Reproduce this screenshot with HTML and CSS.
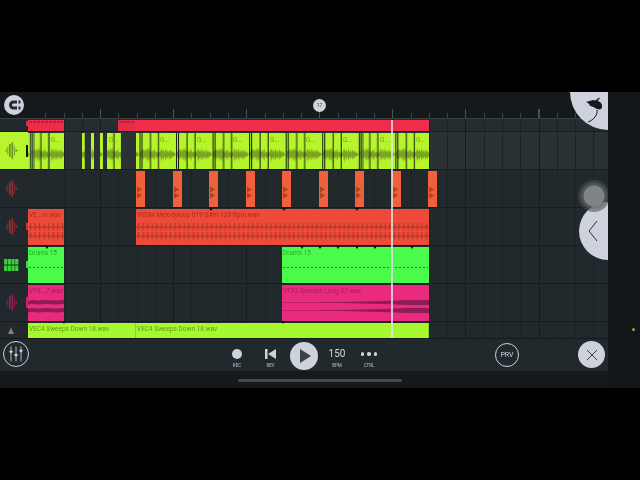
FILE: index.html
```html
<!DOCTYPE html>
<html lang="en">
<head>
<meta charset="utf-8">
<title>FL Studio Mobile</title>
<link rel="stylesheet" href="styles.css">
</head>
<body>
<svg class="defs" width="0" height="0" aria-hidden="true">
  <defs>
    <pattern id="limeWave" patternUnits="userSpaceOnUse" x="1.85" y="0" width="36.55" height="38">
      <path class="lime-wave" d="M0 22L1 18L2 20L3 16L4 19L5 17L6 20L7 16L8 19L9 15L10 20L11 17L12 21L13 18L14 20L15 16L16 21L17 19L18 21L19 18L20 21L21 19L22 16L23 20L24 17L25 21L26 16L27 20L28 18L29 21L30 17L31 20L32 18L33 21L34 19L35 21L36.55 22L35 24L34 25L33 24L32 27L31 25L30 28L29 24L28 27L27 25L26 29L25 24L24 28L23 25L22 30L21 25L20 24L19 27L18 25L17 26L16 24L15 29L14 25L13 27L12 24L11 28L10 25L9 30L8 25L7 29L6 24L5 27L4 25L3 29L2 24L1 27Z"/>
      <rect class="lime-line" x="0" width="1" height="38"/>
      <rect class="lime-line" x="2" width="1" height="38"/>
      <rect class="lime-line" x="10.5" width="1" height="38"/>
      <rect class="lime-line" x="18.5" width="1" height="38"/>
    </pattern>
    <pattern id="redComb" patternUnits="userSpaceOnUse" x="1" y="0" width="9.14" height="36">
      <rect class="comb" x="0" y="17.500" width="9.14" height="1"/>
      <rect class="comb" x="0" y="26.500" width="9.14" height="1"/>
      <rect class="comb" x="1" y="14" width="1" height="7"/>
      <rect class="comb" x="5.57" y="14" width="1" height="7"/>
      <rect class="comb" x="1" y="23" width="1" height="7"/>
      <rect class="comb" x="5.57" y="23" width="1" height="7"/>
    </pattern>
    <symbol id="wave" viewBox="0 0 16 20">
      <path d="M1 8h1v4H1zM3 5h1v10H3zM5 2h2v16H5zM8 0h2v20H8zM11 4h1v12h-1zM13 8l3 2-3 2z"/>
    </symbol>
    <symbol id="burst" viewBox="0 0 8 16">
      <path d="M0 0l7 4-7 4zM0 8l7 4-7 4z"/>
    </symbol>
  </defs>
</svg>

<div class="screen">
  <div class="app">
    <main class="daw">
      <header class="ruler">
        <div class="ruler-gutter"></div>
        <div class="ruler-ticks"></div>
        <button class="magnet" type="button" aria-label="Snap">
          <svg viewBox="0 0 20 20" width="20" height="20"><path class="magnet-shape" d="M13 5.500H9.500a4.500 4.500 0 0 0 0 9H13v-3H9.500a1.500 1.500 0 0 1 0-3H13zM14.500 5.500h2v3h-2zM14.500 11.500h2v3h-2z"/></svg>
        </button>
        <span class="bar-marker">17</span>
      </header>

      <section class="tracks">
        <div class="track track-thin">
          <div class="head"><i class="handle handle-red handle-top"></i></div>
          <div class="lane">
            <div class="clip clip-crimson" style="left:0;width:36px"><i class="strip"></i></div>
            <div class="clip clip-crimson-dim" style="left:90px;width:18px"><i class="strip"></i></div>
            <div class="clip clip-crimson" style="left:108px;width:293px"></div>
          </div>
        </div>

        <div class="track track-hi">
          <div class="head head-selected">
            <svg class="head-icon icon-lime"><use href="#wave"/></svg>
            <i class="handle handle-black"></i>
          </div>
          <div class="lane">
            <svg class="lane-art" width="580" height="38">
              <g class="lime-clips">
                <rect x="0" y="1" width="36" height="36"/>
                <rect x="54" y="1" width="3" height="36"/>
                <rect x="63" y="1" width="3" height="36"/>
                <rect x="72" y="1" width="3" height="36"/>
                <rect x="79" y="1" width="14" height="36"/>
                <rect x="108" y="1" width="293" height="36"/>
              </g>
              <g class="lime-overlay">
                <rect x="0" y="1" width="36" height="36"/>
                <rect x="54" y="1" width="3" height="36"/>
                <rect x="63" y="1" width="3" height="36"/>
                <rect x="72" y="1" width="3" height="36"/>
                <rect x="79" y="1" width="14" height="36"/>
                <rect x="108" y="1" width="293" height="36"/>
              </g>
              <rect class="lime-grey" x="2" y="1" width="5" height="36"/>
              <rect class="lime-grey" x="20" y="1" width="2" height="36"/>
              <rect class="lime-grey" x="332" y="1" width="4" height="36"/>
            </svg>
            <span class="clip-label label-lime" style="left:23px">G...</span>
            <span class="clip-label label-lime" style="left:81px">G...</span>
            <span class="clip-label label-lime" style="left:132px">G...</span>
            <span class="clip-label label-lime" style="left:169px">G...</span>
            <span class="clip-label label-lime" style="left:205px">G...</span>
            <span class="clip-label label-lime" style="left:242px">G...</span>
            <span class="clip-label label-lime" style="left:278px">G...</span>
            <span class="clip-label label-lime" style="left:315px">G...</span>
            <span class="clip-label label-lime" style="left:352px">G...</span>
            <span class="clip-label label-lime" style="left:388px">G...</span>
          </div>
        </div>

        <div class="track">
          <div class="head">
            <svg class="head-icon icon-red"><use href="#wave"/></svg>
          </div>
          <div class="lane">
            <div class="clip clip-orange" style="left:108px;width:9px"><svg class="burst"><use href="#burst"/></svg></div>
            <div class="clip clip-orange" style="left:145px;width:9px"><svg class="burst"><use href="#burst"/></svg></div>
            <div class="clip clip-orange" style="left:181px;width:9px"><svg class="burst"><use href="#burst"/></svg></div>
            <div class="clip clip-orange" style="left:218px;width:9px"><svg class="burst"><use href="#burst"/></svg></div>
            <div class="clip clip-orange" style="left:254px;width:9px"><svg class="burst"><use href="#burst"/></svg></div>
            <div class="clip clip-orange" style="left:291px;width:9px"><svg class="burst"><use href="#burst"/></svg></div>
            <div class="clip clip-orange" style="left:327px;width:9px"><svg class="burst"><use href="#burst"/></svg></div>
            <div class="clip clip-orange" style="left:364px;width:9px"><svg class="burst"><use href="#burst"/></svg></div>
            <div class="clip clip-orange" style="left:400px;width:9px"><svg class="burst"><use href="#burst"/></svg></div>
          </div>
        </div>

        <div class="track">
          <div class="head">
            <svg class="head-icon icon-red"><use href="#wave"/></svg>
            <i class="handle handle-red"></i>
          </div>
          <div class="lane">
            <div class="clip clip-red" style="left:0;width:36px">
              <span class="name">VE...m.wav</span>
              <svg class="fill-art"><rect width="100%" height="100%" fill="url(#redComb)"/></svg>
            </div>
            <div class="clip clip-red" style="left:108px;width:293px">
              <span class="name">VEDM Melodyloop 019 G#m 128 Bpm.wav</span>
              <svg class="fill-art"><rect width="100%" height="100%" fill="url(#redComb)"/></svg>
            </div>
          </div>
        </div>

        <div class="track">
          <div class="head">
            <svg class="head-icon head-drums" viewBox="0 0 16 13">
              <path d="M0 0h3.400v6H0zM4 0h3.400v6H4zM8 0h3.400v6H8zM12 0h3.400v6H12zM0 7h3.400v6H0zM4 7h3.400v6H4zM8 7h3.400v6H8zM12 7h3.400v6H12z"/>
            </svg>
            <i class="handle handle-green"></i>
          </div>
          <div class="lane">
            <div class="clip clip-green" style="left:0;width:36px"><span class="name">Drums 15</span><i class="dash"></i></div>
            <div class="clip clip-green" style="left:254px;width:147px"><span class="name">Drums 15</span><i class="dash"></i></div>
          </div>
        </div>

        <div class="track">
          <div class="head">
            <svg class="head-icon icon-pink"><use href="#wave"/></svg>
            <i class="handle handle-pink"></i>
          </div>
          <div class="lane">
            <div class="clip clip-pink" style="left:0;width:36px">
              <span class="name">VFX...7.wav</span>
              <svg class="fill-art" viewBox="0 0 36 36" preserveAspectRatio="none">
                <path class="pink-wave" d="M0 16l4-1 6 .5 8-.5 10 .5 8-.5v4l-8 .5-10-.5-8 .5-6-.5-4 .5zM0 24l4-1 6 .5 8-.5 10 .5 8-.5v4l-8 .5-10-.5-8 .5-6-.5-4 .5z"/>
              </svg>
            </div>
            <div class="clip clip-pink" style="left:254px;width:147px">
              <span class="name">VFX2 Sweeps Long 07.wav</span>
              <svg class="fill-art" viewBox="0 0 147 36" preserveAspectRatio="none">
                <path class="pink-wave" d="M0 17.200H30L60 17L80 16.500L100 16L115 15.500L125 15L147 15V20L125 20L115 19.500L100 19L80 18.500L60 18L30 17.800H0zM0 25.200H30L60 25L80 24.500L100 24L115 23.500L125 23L147 23V28L125 28L115 27.500L100 27L80 26.500L60 26L30 25.800H0z"/>
              </svg>
            </div>
          </div>
        </div>

        <div class="track track-last">
          <div class="head">
            <svg class="head-icon head-cone" viewBox="0 0 6 7"><path d="M3 0l1 3 2 4H0l2-4z"/></svg>
          </div>
          <div class="lane">
            <div class="clip clip-lime" style="left:0;width:108px"><span class="name">VEC4 Sweeps Down 18.wav</span></div>
            <div class="clip clip-lime" style="left:108px;width:293px"><span class="name">VEC4 Sweeps Down 18.wav</span></div>
          </div>
        </div>

        <i class="notch" style="left:209px;top:89px"></i>
        <i class="notch" style="left:282px;top:89px"></i>
        <i class="notch" style="left:355px;top:89px"></i>
        <i class="notch" style="left:45px;top:127px"></i>
        <i class="notch" style="left:300px;top:127px"></i>
        <i class="notch" style="left:318px;top:127px"></i>
        <i class="notch" style="left:336px;top:127px"></i>
        <i class="notch" style="left:355px;top:127px"></i>
        <i class="notch" style="left:373px;top:127px"></i>
        <i class="notch" style="left:410px;top:127px"></i>
        <i class="notch" style="left:62px;top:202px"></i>
        <i class="notch" style="left:281px;top:202px"></i>

        <div class="playhead"></div>
      </section>

      <footer class="transport">
        <button class="mixer" type="button" aria-label="Mixer">
          <svg viewBox="0 0 24 24" width="24" height="24">
            <path class="mixer-lines" d="M6 3v18M12 3v18M18 3v18"/>
            <path class="mixer-knobs" d="M4 8h4v1.500l-2 2-2-2zM10 12h4v1.500l-2 2-2-2zM16 7h4v1.500l-2 2-2-2z"/>
          </svg>
        </button>
        <div class="controls">
          <div class="control control-rec"><i class="rec-dot"></i><span class="control-label">REC</span></div>
          <div class="control control-rev">
            <svg width="12" height="10" viewBox="0 0 12 10"><path class="light-fill" d="M0 0h2.500v10H0zM11 0v10L3 5z"/></svg>
            <span class="control-label">REV</span>
          </div>
          <button class="play" type="button" aria-label="Play">
            <svg width="12" height="14" viewBox="0 0 12 14"><path class="dark-fill" d="M1 0l11 7-11 7z"/></svg>
          </button>
          <div class="control control-bpm"><span class="bpm-value">150</span><span class="control-label">BPM</span></div>
          <div class="control control-ctrl"><span class="dots"><i></i><i></i><i></i></span><span class="control-label">CTRL</span></div>
        </div>
        <button class="prv" type="button">PRV</button>
        <button class="close" type="button" aria-label="Close">
          <svg width="12" height="12" viewBox="0 0 12 12"><path class="close-x" d="M1 1l10 10M11 1L1 11"/></svg>
        </button>
      </footer>

      <nav class="nav"><i class="nav-pill"></i></nav>

      <button class="fab-top" type="button" aria-label="Menu">
        <svg width="30" height="36" viewBox="0 0 30 36">
          <path class="fruit" d="M1 10L8 8L10.500 8.500L14 5.500L14.800 6.200L12.500 9C15.500 9.500 17.500 12 17 15C16.500 18 13.500 17.500 12 17C10 16 8 14.500 5 14C5 12 3 11 1 10Z"/>
          <path class="fruit-line" d="M12 18C13 22 9 28 3 30"/>
        </svg>
      </button>
      <button class="fab-side" type="button" aria-label="Open">
        <svg width="10" height="22" viewBox="0 0 10 22"><path class="chev" d="M9 1L1 11l8 10"/></svg>
      </button>
      <div class="knob"></div>
    </main>
    <aside class="side"><i class="led"></i></aside>
  </div>
</div>
</body>
</html>
```

FILE: styles.css
```css
* { box-sizing: border-box; }
html, body { margin: 0; height: 100%; background: #000; overflow: hidden; }
button { border: 0; padding: 0; margin: 0; font: inherit; }
i { display: block; }
.defs { position: absolute; }

.screen {
  height: 480px;
  padding-top: 92px;
  font-family: Roboto, "Liberation Sans", sans-serif;
}
.app { display: flex; height: 296px; filter: blur(.4px); }
.daw {
  position: relative;
  width: 608px;
  display: flex;
  flex-direction: column;
  overflow: hidden;
  background: #22292c;
}
.side { position: relative; flex: 1; background: #10161a; }
.led {
  position: absolute; left: 24px; top: 236px;
  width: 3px; height: 3px; border-radius: 50%;
  background: #c98a2c;
}

/* ruler */
.ruler {
  position: relative;
  height: 27px;
  flex: none;
  display: flex;
  background: #14191c;
  border-bottom: 1px solid #3a4144;
}
.ruler-gutter { flex: none; width: 28px; }
.ruler-ticks {
  flex: 1;
  background-image:
    repeating-linear-gradient(90deg, transparent 0 71.58px, #4b5255 71.58px 73.08px),
    repeating-linear-gradient(90deg, transparent 0 17.27px, #3c4346 17.27px 18.27px);
  background-size: 100% 9px, 100% 5px;
  background-position: 0 17px, 0 21px;
  background-repeat: no-repeat;
}
.magnet {
  position: absolute; left: 4px; top: 3px;
  width: 20px; height: 20px; border-radius: 50%;
  background: #cdd2dc;
}
.magnet-shape { fill: #22292c; }
.bar-marker {
  position: absolute; left: 313px; top: 7px;
  width: 13px; height: 13px; border-radius: 50%;
  background: #cdd2dc; color: #3c4448;
  font-size: 5px; line-height: 13px; text-align: center;
}

/* tracks */
.tracks { position: relative; flex: 1; display: flex; flex-direction: column; min-height: 0; }
.track { flex: none; height: 38px; display: flex; background: #22292c; border-bottom: 1px solid #171c1f; }
.track-thin { height: 13px; background: #262d30; }
.track-hi { background: #2b3235; }
.track-last { height: 16px; border-bottom: 0; }
.head { position: relative; flex: none; width: 28px; display: flex; align-items: center; justify-content: center; padding-right: 6px; background: #22292c; }
.head-selected { background: #b7f52e; }
.head-icon { width: 13px; height: 17px; }
.icon-lime { fill: #6a9420; }
.icon-red { fill: #8e3135; }
.icon-pink { fill: #8a2258; }
.head-drums { width: 15px; height: 12px; fill: #39d23c; }
.head-cone { width: 6px; height: 7px; fill: #8e8268; }
.handle { position: absolute; right: 0; width: 2px; height: 7px; top: 15px; }
.handle-top { top: 2px; height: 5px; }
.handle-red { background: #c63a34; }
.handle-black { background: #11160a; height: 12px; top: 13px; }
.handle-green { background: #3bd43d; }
.handle-pink { background: #c9246e; height: 11px; top: 13px; }

.lane {
  position: relative;
  flex: 1;
  background-image:
    repeating-linear-gradient(90deg, transparent 0 72.08px, #161b1e 72.08px 73.08px),
    repeating-linear-gradient(90deg, transparent 0 17.27px, #1c2225 17.27px 18.27px);
}
.lane-art { position: absolute; left: 0; top: 0; }
.lime-clips rect { fill: #b6f52c; }
.lime-overlay rect { fill: url(#limeWave); }
.lime-wave { fill: #7aa422; }
.lime-line { fill: #141c0c; }
.lime-grey { fill: #55703a; fill-opacity: .6; }
.clip-label { position: absolute; top: 4px; font-size: 6.500px; line-height: 9px; }
.label-lime { color: #7aa422; }

.clip { position: absolute; top: 1px; bottom: 0; overflow: hidden; white-space: nowrap; }
.name { position: absolute; left: 1px; top: 2px; font-size: 6.500px; line-height: 9px; }
.fill-art { position: absolute; left: 0; top: 0; width: 100%; height: 100%; }
.comb { fill: #aa3226; }
.clip-crimson { background: #ef2c4a; }
.clip-crimson-dim { background: #e62c48; }
.strip { height: 2px; margin: 1px 1px 0; background: repeating-linear-gradient(90deg, #a82a3a 0 3px, transparent 3px 4px); }
.clip-orange { background: #f0603a; fill: #a8452c; }
.burst { position: absolute; left: 1px; top: 14px; width: 6px; height: 15px; }
.clip-red { background: #ee4a3a; color: #a8301f; }
.clip-green { background: #4afb4c; color: #2aa72d; }
.dash {
  position: absolute; left: 1px; right: 1px; top: 20px; height: 1px;
  background: repeating-linear-gradient(90deg, #1f8f22 0 2px, transparent 2px 4px);
}
.clip-pink { background: #ea2a7e; color: #a81b5c; }
.pink-wave { fill: #8f1c56; }
.clip-lime { background: #a6f830; color: #5f9a1c; border-right: 1px solid #8ad428; }

.notch { position: absolute; width: 0; height: 0; border-left: 2px solid transparent; border-right: 2px solid transparent; border-top: 3px solid #0e1214; }

.playhead {
  position: absolute; left: 391px; top: 1px; bottom: 0; width: 2px;
  background: rgba(225, 228, 230, .82);
}

/* transport */
.transport { position: relative; flex: none; height: 33px; display: flex; align-items: center; background: #22292c; border-top: 1px solid #14191c; }
.mixer {
  position: absolute; left: 3px; top: 2px;
  width: 26px; height: 26px; border-radius: 50%;
  background: transparent; border: 1px solid #cdd2dc;
  display: flex; align-items: center; justify-content: center;
}
.mixer svg { width: 20px; height: 20px; }
.mixer-lines { stroke: #cdd2dc; stroke-width: 1; fill: none; }
.mixer-knobs { fill: #cdd2dc; }
.controls { position: absolute; left: 224px; top: 0; height: 33px; display: flex; align-items: center; }
.control { position: relative; width: 26px; height: 33px; display: flex; flex-direction: column; align-items: center; padding-top: 10px; }
.control-rec { width: 26px; }
.control-rev { width: 41px; padding-top: 10px; }
.control-bpm { width: 30px; margin-left: 4px; padding-top: 9px; }
.control-ctrl { width: 30px; margin-left: 2px; padding-top: 13px; }
.control-label { position: absolute; left: 0; right: 0; top: 24px; text-align: center; font-size: 4.500px; line-height: 6px; color: #bcc1c8; }
.rec-dot { width: 10px; height: 10px; border-radius: 50%; background: #cdd2dc; }
.light-fill { fill: #cdd2dc; }
.dark-fill { fill: #3b4245; }
.play {
  width: 28px; height: 28px; border-radius: 50%; background: #cdd2dc; margin-left: -1px;
  display: flex; align-items: center; justify-content: center; padding-left: 2px;
}
.bpm-value { font-size: 10px; line-height: 12px; color: #d4d8de; }
.dots { display: flex; gap: 3px; }
.dots i { width: 3.500px; height: 3.500px; border-radius: 50%; background: #cdd2dc; }
.prv {
  position: absolute; left: 495px; top: 4px;
  width: 24px; height: 24px; border-radius: 50%;
  background: transparent; border: 1px solid #cdd2dc; color: #cdd2dc;
  font-size: 7px; line-height: 22px; text-align: center;
}
.close {
  position: absolute; left: 578px; top: 2px;
  width: 27px; height: 27px; border-radius: 50%; background: #cdd2dc;
  display: flex; align-items: center; justify-content: center;
}
.close-x { stroke: #3b4245; stroke-width: 1; fill: none; }

.nav { flex: none; height: 17px; background: #14191c; display: flex; justify-content: center; padding: 8px 0 0 0; }
.nav-pill { width: 164px; height: 3px; border-radius: 2px; background: #44494c; margin-left: 32px; }

/* floating */
.fab-top {
  position: absolute; left: 570px; top: -38px;
  width: 76px; height: 76px; border-radius: 50%; background: #cdd2dc;
}
.fab-top svg { position: absolute; left: 15px; top: 38px; }
.fruit { fill: #14191c; }
.fruit-line { stroke: #14191c; stroke-width: 1; fill: none; }
.knob {
  position: absolute; left: 578px; top: 88px;
  width: 32px; height: 32px; border-radius: 50%;
  background: radial-gradient(circle, #7f8486 0 10px, rgba(90, 96, 99, .75) 11px 13px, rgba(70, 76, 79, .55) 14px 16px);
}
.fab-side {
  position: absolute; left: 579px; top: 110px;
  width: 58px; height: 58px; border-radius: 50%; background: #cdd2dc;
}
.fab-side svg { position: absolute; left: 9px; top: 18px; }
.chev { stroke: #2c3336; stroke-width: 1; fill: none; }
```
